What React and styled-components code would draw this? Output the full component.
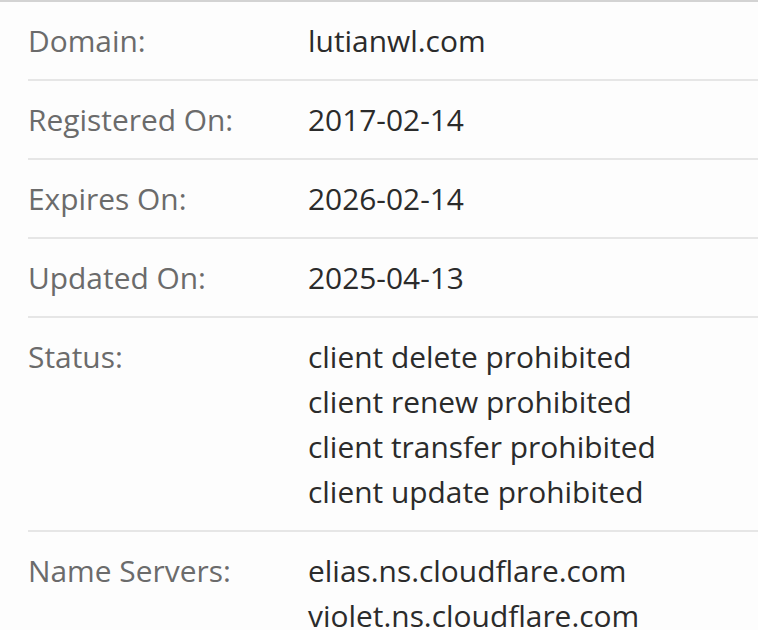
import React from 'react';
import styled, {createGlobalStyle} from 'styled-components';

// ********** Global ********** //

const GlobalStyle = createGlobalStyle`
  body {
    margin: 0;
    background: #fdfdfd;
    font-family: "Open Sans", "Liberation Sans", sans-serif;
  }
`;

// ********** Table ********** //

const Wrapper = styled.div`
  border-top: 2px solid #d3d3d3;
  padding-left: 28px;
  width: 730px;
`;

const Row = styled.div`
  display: grid;
  grid-template-columns: 280px 1fr;
  padding: 16px 0 16px 0;
  border-bottom: 2px solid #e6e6e6;
  font-size: 29.9px;
  line-height: 45px;
`;

const Label = styled.div`
  color: #6b6b6b;
`;

const Value = styled.div`
  color: #2b2b2b;
  white-space: nowrap;
`;

const rows = [
  ['Domain:', ['lutianwl.com']],
  ['Registered On:', ['2017-02-14']],
  ['Expires On:', ['2026-02-14']],
  ['Updated On:', ['2025-04-13']],
  ['Status:', [
    'client delete prohibited',
    'client renew prohibited',
    'client transfer prohibited',
    'client update prohibited',
  ]],
  ['Name Servers:', ['elias.ns.cloudflare.com', 'violet.ns.cloudflare.com']],
];

// ********** App Component ********** //

const App = () => {
  return (
    <>
      <GlobalStyle />
      <Wrapper>
        {rows.map(([label, values]) => (
          <Row key={label}>
            <Label>{label}</Label>
            <Value>
              {values.map(v => <div key={v}>{v}</div>)}
            </Value>
          </Row>
        ))}
      </Wrapper>
    </>
  );
};

export default App;
